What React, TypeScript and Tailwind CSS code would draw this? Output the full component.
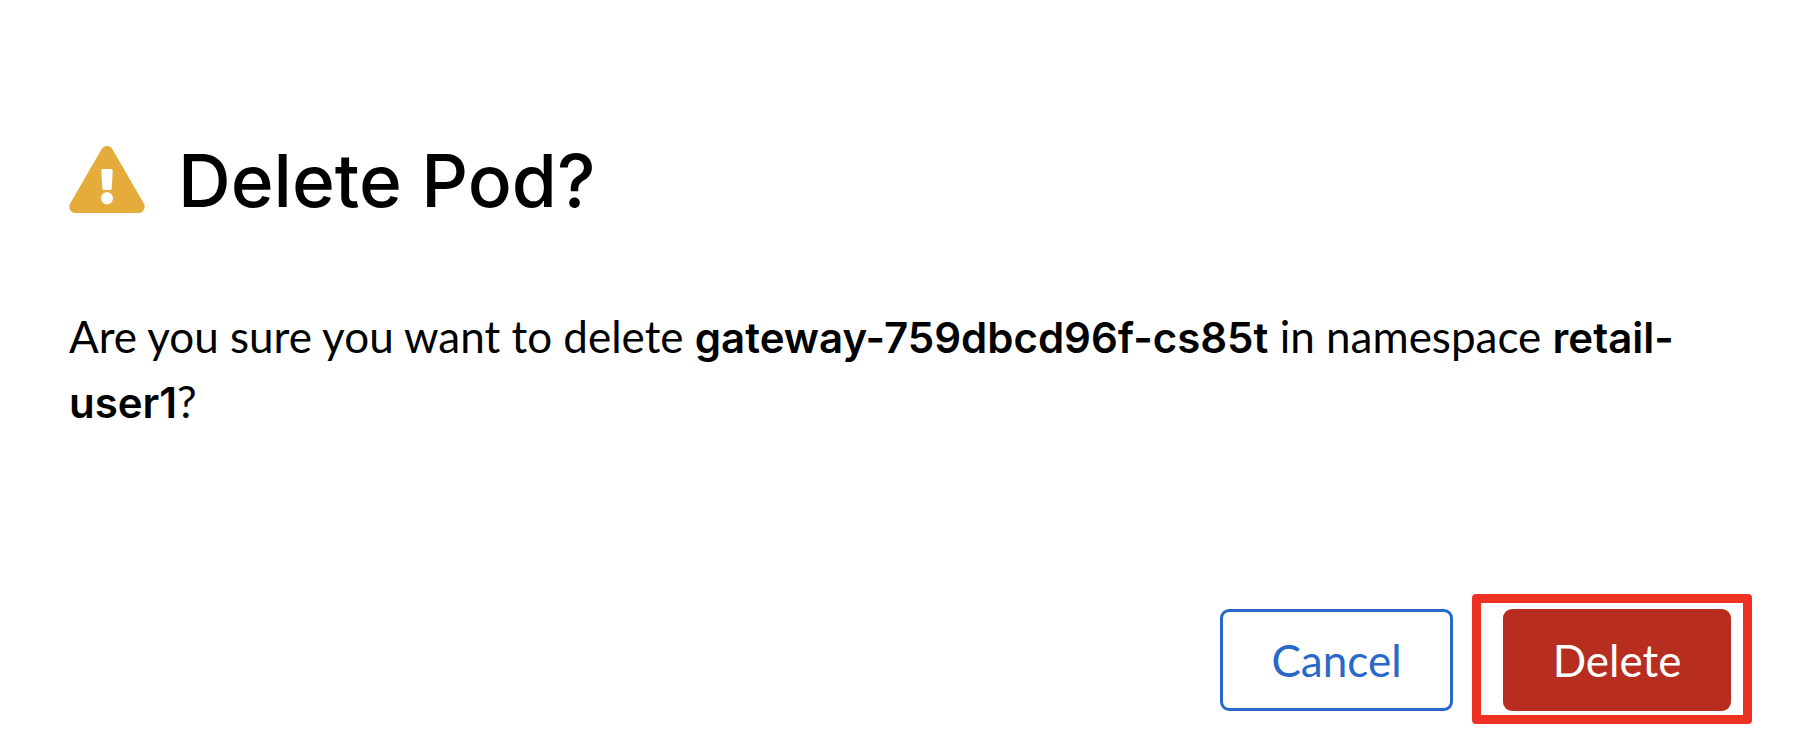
import { FaExclamationTriangle } from "react-icons/fa";

export default function App() {
  return (
    <main
      role="alertdialog"
      aria-labelledby="dialog-title"
      aria-describedby="dialog-body"
      className="flex min-h-screen flex-col bg-white pt-[136px] pr-[71px] pb-[45px] pl-[69px] font-['Lato',sans-serif] text-black"
    >
      <header className="flex items-center gap-[33px]">
        <FaExclamationTriangle
          aria-hidden="true"
          className="-mt-1 h-[67px] w-[76px] shrink-0 text-[#e5ac3c]"
        />
        <h1
          id="dialog-title"
          className="font-['Inter',sans-serif] text-[73px] leading-[90px] font-medium"
        >
          Delete Pod?
        </h1>
      </header>

      <p id="dialog-body" className="mt-[78px] text-[44px] leading-[65px]">
        Are you sure you want to delete{" "}
        <strong className="font-['Inter',sans-serif] text-[42px] leading-none font-semibold">
          gateway-759dbcd96f-cs85t
        </strong>{" "}
        in namespace{" "}
        <strong className="font-['Inter',sans-serif] text-[42px] leading-none font-semibold">
          retail-user1
        </strong>
        ?
      </p>

      <footer className="mt-auto flex justify-end gap-[50px]">
        <button
          type="button"
          className="h-[102px] w-[233px] rounded-[9px] border-3 border-[#2868c8] text-[44px] text-[#2868c8]"
        >
          Cancel
        </button>
        <div className="relative">
          <button
            type="button"
            className="h-[102px] w-[228px] rounded-[9px] bg-[#b72d1f] text-[44px] text-white"
          >
            Delete
          </button>
          <span
            aria-hidden="true"
            className="pointer-events-none absolute -top-[15px] -right-[21px] -bottom-[13px] -left-[31px] rounded-[4px] border-9 border-[#ed3223]"
          />
        </div>
      </footer>
    </main>
  );
}
